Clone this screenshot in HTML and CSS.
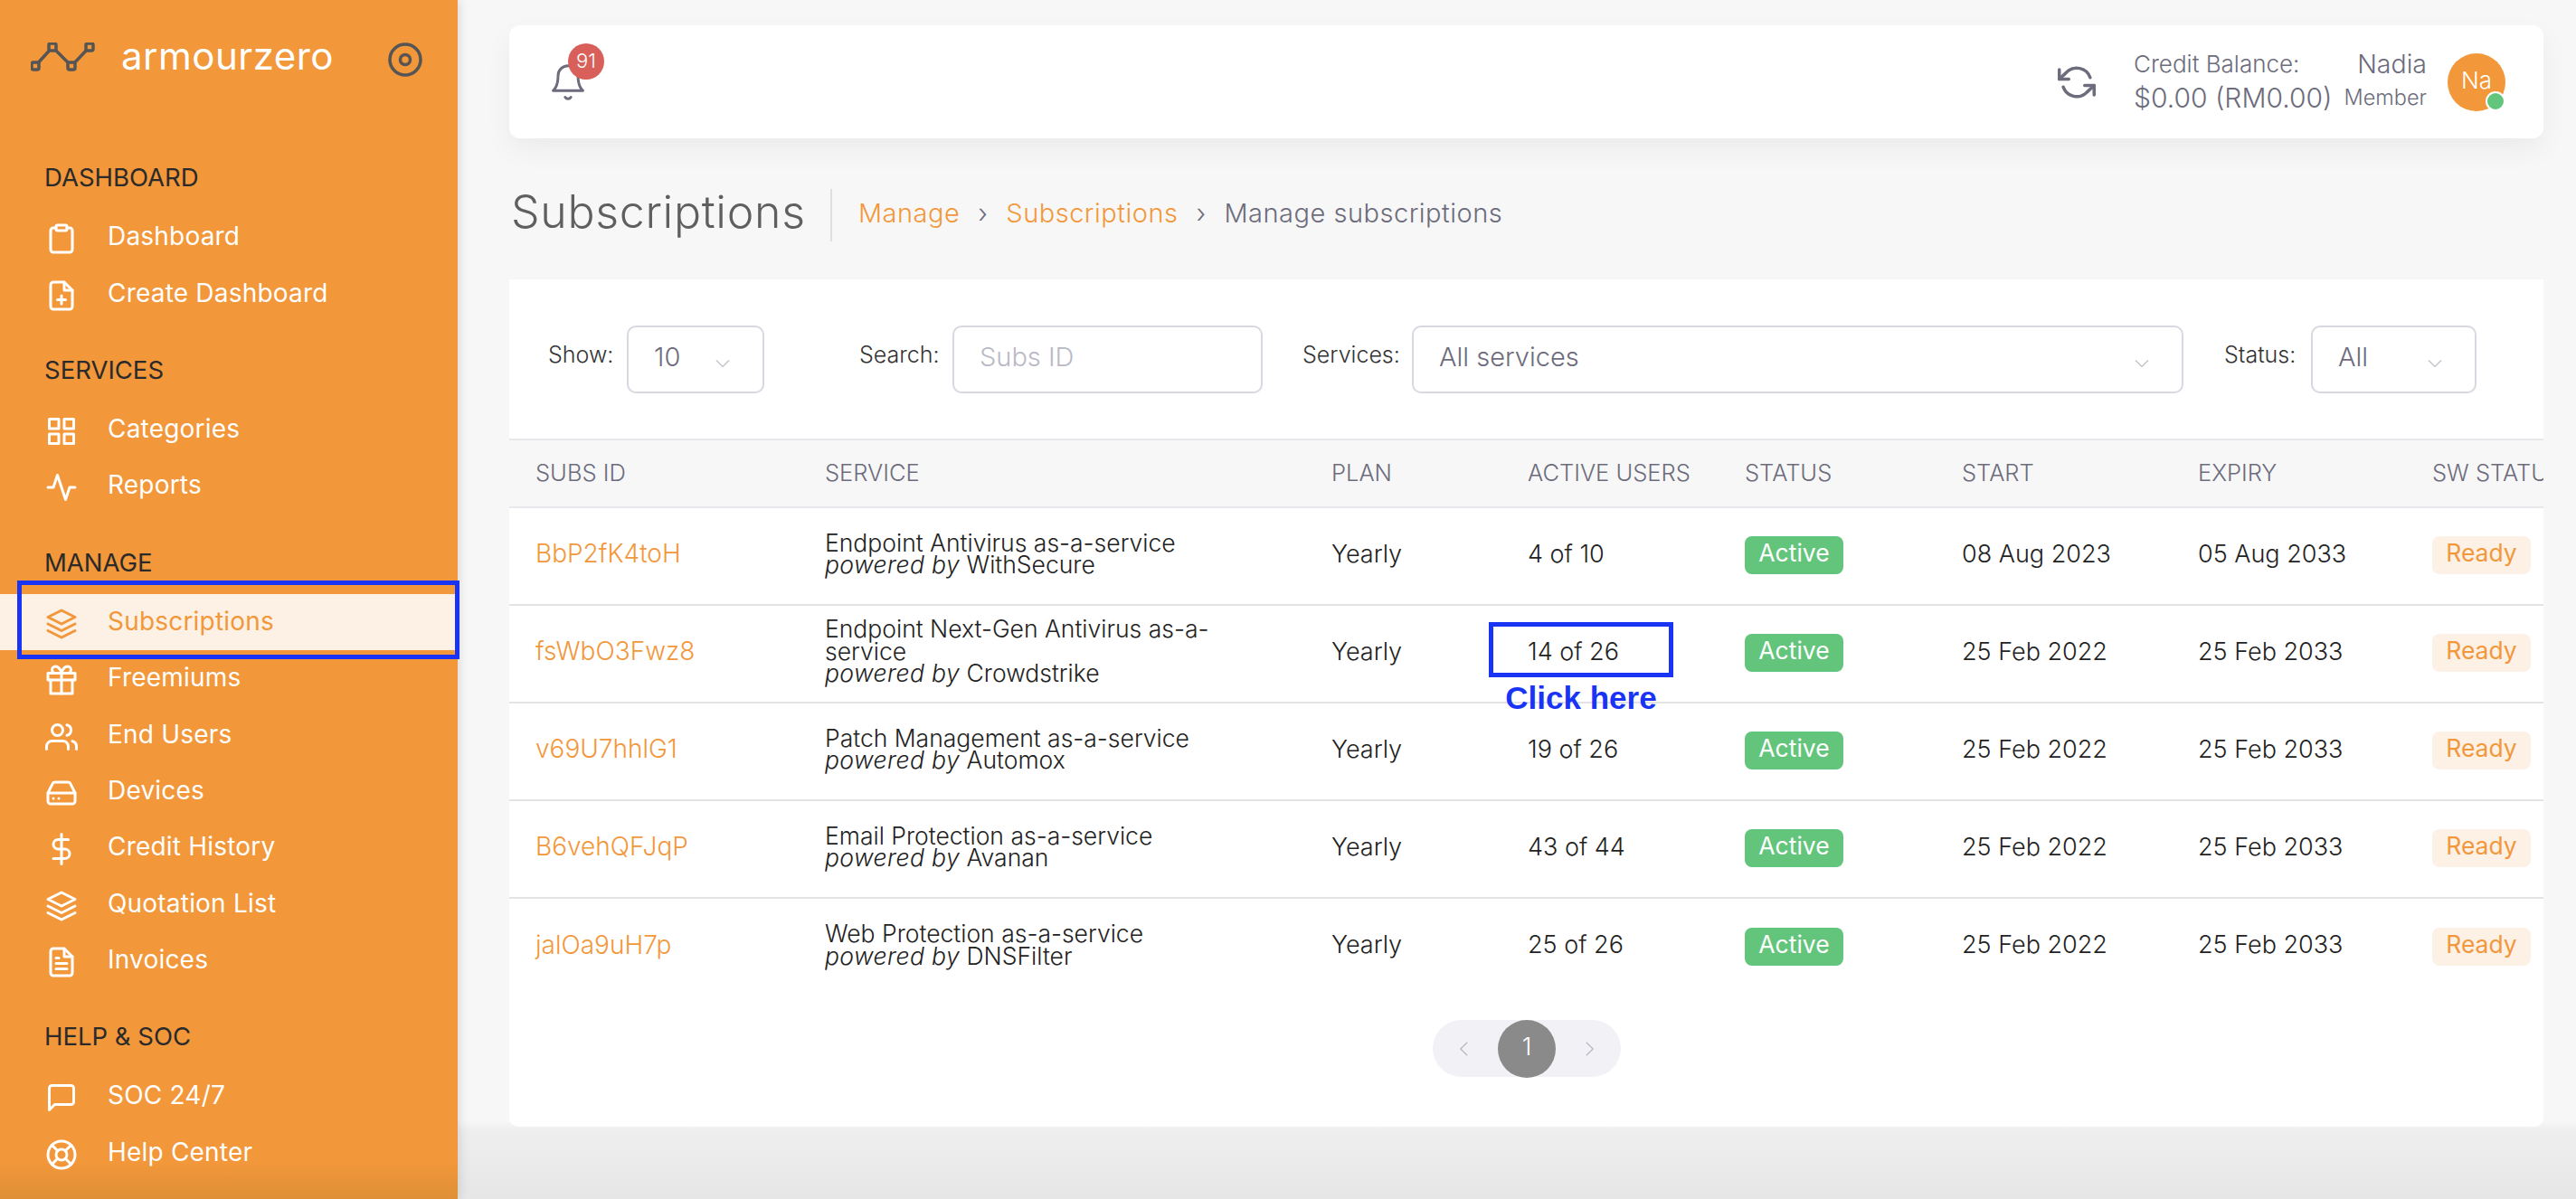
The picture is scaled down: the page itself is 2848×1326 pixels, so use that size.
FILE: index.html
```html
<!DOCTYPE html>
<html lang="en">
<head>
<meta charset="utf-8">
<title>Subscriptions</title>
<link rel="stylesheet" href="styles.css">
</head>
<body>
<svg class="sprite" aria-hidden="true">
  <symbol id="i-clipboard" viewBox="0 0 24 24"><path d="M16 4h2a2 2 0 0 1 2 2v14a2 2 0 0 1-2 2H6a2 2 0 0 1-2-2V6a2 2 0 0 1 2-2h2"/><rect x="8" y="2" width="8" height="4" rx="1"/></symbol>
  <symbol id="i-file-plus" viewBox="0 0 24 24"><path d="M14 2H6a2 2 0 0 0-2 2v16a2 2 0 0 0 2 2h12a2 2 0 0 0 2-2V8z"/><polyline points="14 2 14 8 20 8"/><line x1="12" y1="18" x2="12" y2="12"/><line x1="9" y1="15" x2="15" y2="15"/></symbol>
  <symbol id="i-grid" viewBox="0 0 24 24"><rect x="3" y="3" width="7" height="7"/><rect x="14" y="3" width="7" height="7"/><rect x="14" y="14" width="7" height="7"/><rect x="3" y="14" width="7" height="7"/></symbol>
  <symbol id="i-activity" viewBox="0 0 24 24"><polyline points="22 12 18 12 15 21 9 3 6 12 2 12"/></symbol>
  <symbol id="i-layers" viewBox="0 0 24 24"><polygon points="12 2 2 7 12 12 22 7 12 2"/><polyline points="2 17 12 22 22 17"/><polyline points="2 12 12 17 22 12"/></symbol>
  <symbol id="i-gift" viewBox="0 0 24 24"><polyline points="20 12 20 22 4 22 4 12"/><rect x="2" y="7" width="20" height="5"/><line x1="12" y1="22" x2="12" y2="7"/><path d="M12 7H7.5a2.5 2.5 0 0 1 0-5C11 2 12 7 12 7z"/><path d="M12 7h4.5a2.5 2.5 0 0 0 0-5C13 2 12 7 12 7z"/></symbol>
  <symbol id="i-users" viewBox="0 0 24 24"><path d="M17 21v-2a4 4 0 0 0-4-4H5a4 4 0 0 0-4 4v2"/><circle cx="9" cy="7" r="4"/><path d="M23 21v-2a4 4 0 0 0-3-3.87"/><path d="M16 3.13a4 4 0 0 1 0 7.75"/></symbol>
  <symbol id="i-drive" viewBox="0 0 24 24"><line x1="22" y1="12" x2="2" y2="12"/><path d="M5.45 5.11L2 12v6a2 2 0 0 0 2 2h16a2 2 0 0 0 2-2v-6l-3.45-6.89A2 2 0 0 0 16.76 4H7.24a2 2 0 0 0-1.79 1.11z"/><line x1="6" y1="16" x2="6.01" y2="16"/><line x1="10" y1="16" x2="10.01" y2="16"/></symbol>
  <symbol id="i-dollar" viewBox="0 0 24 24"><line x1="12" y1="1" x2="12" y2="23"/><path d="M17 5H9.5a3.5 3.5 0 0 0 0 7h5a3.5 3.5 0 0 1 0 7H6"/></symbol>
  <symbol id="i-file-text" viewBox="0 0 24 24"><path d="M14 2H6a2 2 0 0 0-2 2v16a2 2 0 0 0 2 2h12a2 2 0 0 0 2-2V8z"/><polyline points="14 2 14 8 20 8"/><line x1="16" y1="13" x2="8" y2="13"/><line x1="16" y1="17" x2="8" y2="17"/><polyline points="10 9 9 9 8 9"/></symbol>
  <symbol id="i-message" viewBox="0 0 24 24"><path d="M21 15a2 2 0 0 1-2 2H7l-4 4V5a2 2 0 0 1 2-2h14a2 2 0 0 1 2 2z"/></symbol>
  <symbol id="i-buoy" viewBox="0 0 24 24"><circle cx="12" cy="12" r="10"/><circle cx="12" cy="12" r="4"/><line x1="4.93" y1="4.93" x2="9.17" y2="9.17"/><line x1="14.83" y1="14.83" x2="19.07" y2="19.07"/><line x1="14.83" y1="9.17" x2="19.07" y2="4.93"/><line x1="4.93" y1="19.07" x2="9.17" y2="14.83"/></symbol>
  <symbol id="i-chevron" viewBox="0 0 16 8"><polyline points="1 0.5 8 7.5 15 0.5"/></symbol>
</svg>

<aside class="sidebar">
  <div class="brand">
    <svg class="brand-logo" viewBox="0 0 71 34"><polyline points="5 26 24 5 45 26 65 5"/><rect x="1" y="22" width="8" height="8" rx="2"/><rect x="20" y="1" width="8" height="8" rx="2"/><rect x="41" y="22" width="8" height="8" rx="2"/><rect x="61" y="1" width="8" height="8" rx="2"/></svg>
    <span class="brand-name">armourzero</span>
    <svg class="brand-target" viewBox="0 0 38 38"><circle cx="19" cy="19" r="17"/><circle cx="19" cy="19" r="5.5"/></svg>
  </div>
  <nav>
    <h2 class="nav-title">DASHBOARD</h2>
    <a class="nav-item"><svg class="ico"><use href="#i-clipboard"/></svg><span>Dashboard</span></a>
    <a class="nav-item"><svg class="ico"><use href="#i-file-plus"/></svg><span>Create Dashboard</span></a>
    <h2 class="nav-title">SERVICES</h2>
    <a class="nav-item"><svg class="ico"><use href="#i-grid"/></svg><span>Categories</span></a>
    <a class="nav-item"><svg class="ico"><use href="#i-activity"/></svg><span>Reports</span></a>
    <h2 class="nav-title">MANAGE</h2>
    <a class="nav-item active"><svg class="ico"><use href="#i-layers"/></svg><span>Subscriptions</span><i class="nav-mark"></i></a>
    <a class="nav-item"><svg class="ico"><use href="#i-gift"/></svg><span>Freemiums</span></a>
    <a class="nav-item"><svg class="ico"><use href="#i-users"/></svg><span>End Users</span></a>
    <a class="nav-item"><svg class="ico"><use href="#i-drive"/></svg><span>Devices</span></a>
    <a class="nav-item"><svg class="ico"><use href="#i-dollar"/></svg><span>Credit History</span></a>
    <a class="nav-item"><svg class="ico"><use href="#i-layers"/></svg><span>Quotation List</span></a>
    <a class="nav-item"><svg class="ico"><use href="#i-file-text"/></svg><span>Invoices</span></a>
    <h2 class="nav-title">HELP &amp; SOC</h2>
    <a class="nav-item"><svg class="ico"><use href="#i-message"/></svg><span>SOC 24/7</span></a>
    <a class="nav-item"><svg class="ico"><use href="#i-buoy"/></svg><span>Help Center</span></a>
  </nav>
</aside>

<main class="main">
  <header class="topbar">
    <div class="bell">
      <svg class="bell-ico" viewBox="0 0 24 24"><path d="M18 8A6 6 0 0 0 6 8c0 7-3 9-3 9h18s-3-2-3-9"/><path d="M13.73 21a2 2 0 0 1-3.46 0"/></svg>
      <span class="bell-badge">91</span>
    </div>
    <svg class="refresh" viewBox="0 0 24 24"><polyline points="1 4 1 10 7 10"/><polyline points="23 20 23 14 17 14"/><path d="M20.49 9A9 9 0 0 0 5.64 5.64L1 10m22 4l-4.64 4.36A9 9 0 0 1 3.51 15"/></svg>
    <div class="credit"><div class="credit-label">Credit Balance:</div><div class="credit-value">$0.00 (RM0.00)</div></div>
    <div class="user"><div class="user-name">Nadia</div><div class="user-role">Member</div></div>
    <div class="avatar">Na<i class="avatar-dot"></i></div>
  </header>

  <div class="title-row">
    <h1 class="title">Subscriptions</h1>
    <ol class="crumbs">
      <li class="crumb-link">Manage</li>
      <li class="crumb-sep">›</li>
      <li class="crumb-link">Subscriptions</li>
      <li class="crumb-sep">›</li>
      <li>Manage subscriptions</li>
    </ol>
  </div>

  <section class="card">
    <div class="filters">
      <label class="f-label f-show">Show:</label>
      <div class="field f-w-show"><span>10</span><svg class="chev"><use href="#i-chevron"/></svg></div>
      <label class="f-label f-search">Search:</label>
      <div class="field f-w-search placeholder"><span>Subs ID</span></div>
      <label class="f-label f-services">Services:</label>
      <div class="field f-w-services"><span>All services</span><svg class="chev"><use href="#i-chevron"/></svg></div>
      <label class="f-label f-status">Status:</label>
      <div class="field f-w-status"><span>All</span><svg class="chev"><use href="#i-chevron"/></svg></div>
    </div>
    <div class="table-wrap">
      <table class="table">
        <colgroup><col class="c1"><col class="c2"><col class="c3"><col class="c4"><col class="c5"><col class="c6"><col class="c7"><col class="c8"></colgroup>
        <thead><tr><th>SUBS ID</th><th>SERVICE</th><th>PLAN</th><th>ACTIVE USERS</th><th>STATUS</th><th>START</th><th>EXPIRY</th><th>SW STATUS</th></tr></thead>
        <tbody>
          <tr><td class="sid">BbP2fK4toH</td><td class="svc"><div>Endpoint Antivirus as-a-service</div><div><em>powered by</em> WithSecure</div></td><td>Yearly</td><td>4 of 10</td><td><span class="badge ok">Active</span></td><td>08 Aug 2023</td><td>05 Aug 2033</td><td><span class="badge ready">Ready</span></td></tr>
          <tr><td class="sid">fsWbO3Fwz8</td><td class="svc"><div>Endpoint Next-Gen Antivirus as-a-service</div><div><em>powered by</em> Crowdstrike</div></td><td>Yearly</td><td class="marked">14 of 26<i class="mark-box"><b class="mark-text">Click here</b></i></td><td><span class="badge ok">Active</span></td><td>25 Feb 2022</td><td>25 Feb 2033</td><td><span class="badge ready">Ready</span></td></tr>
          <tr><td class="sid">v69U7hhlG1</td><td class="svc"><div>Patch Management as-a-service</div><div><em>powered by</em> Automox</div></td><td>Yearly</td><td>19 of 26</td><td><span class="badge ok">Active</span></td><td>25 Feb 2022</td><td>25 Feb 2033</td><td><span class="badge ready">Ready</span></td></tr>
          <tr><td class="sid">B6vehQFJqP</td><td class="svc"><div>Email Protection as-a-service</div><div><em>powered by</em> Avanan</div></td><td>Yearly</td><td>43 of 44</td><td><span class="badge ok">Active</span></td><td>25 Feb 2022</td><td>25 Feb 2033</td><td><span class="badge ready">Ready</span></td></tr>
          <tr><td class="sid">jalOa9uH7p</td><td class="svc"><div>Web Protection as-a-service</div><div><em>powered by</em> DNSFilter</div></td><td>Yearly</td><td>25 of 26</td><td><span class="badge ok">Active</span></td><td>25 Feb 2022</td><td>25 Feb 2033</td><td><span class="badge ready">Ready</span></td></tr>
        </tbody>
      </table>
    </div>
    <div class="pager-row">
      <div class="pager">
        <svg class="pg-chev" viewBox="0 0 12 20"><polyline points="10 2 2 10 10 18"/></svg>
        <span class="pg-num">1</span>
        <svg class="pg-chev" viewBox="0 0 12 20"><polyline points="2 2 10 10 2 18"/></svg>
      </div>
    </div>
  </section>
</main>
</body>
</html>
```
FILE: styles.css
```css
* { box-sizing: border-box; }
html, body { margin: 0; padding: 0; }
body {
  width: 2848px;
  height: 1326px;
  display: flex;
  overflow: hidden;
  font-family: "Inter", "Liberation Sans", sans-serif;
  color: #222;
  background: linear-gradient(to bottom, #f7f7f7 0, #f7f7f7 1240px, #eeeeee 1250px, #e6e6e6 100%);
}
.sprite { display: none; }

/* Sidebar */
.sidebar {
  flex: 0 0 506px;
  height: 1326px;
  background: linear-gradient(to bottom, #f2973a 0, #f2973a 97%, #de8f37 100%);
  box-shadow: 2px 0 10px rgba(0, 0, 0, .12);
  position: relative;
  z-index: 2;
}
.brand {
  height: 128px;
  display: flex;
  align-items: center;
  padding-left: 34px;
  position: relative;
}
.brand-logo { width: 71px; height: 34px; fill: #f2973a; stroke: #555; stroke-width: 3.5; margin-bottom: 1px; }
.brand-logo polyline { fill: none; }
.brand-name { margin-left: 29px; font-size: 42px; font-weight: 400; color: #fff; margin-bottom: 5px; letter-spacing: .5px; }
.brand-target { width: 38px; height: 38px; fill: none; stroke: #555; stroke-width: 3.5; position: absolute; left: 429px; top: 47px; }
.sidebar nav { padding-top: 15px; }
.nav-title {
  margin: 33px 0 15px;
  padding-left: 49px;
  height: 40px;
  line-height: 40px;
  font-size: 27.5px;
  font-weight: 400;
  color: #2a2a2a;
}
.nav-item {
  height: 62.4px;
  display: flex;
  align-items: center;
  padding-left: 50px;
  color: #fff;
  font-size: 28px;
  font-weight: 400;
  letter-spacing: .2px;
  position: relative;
}
.nav-item span { margin-left: 33px; margin-bottom: 2px; }
.ico {
  width: 36px;
  height: 36px;
  fill: none;
  stroke: currentColor;
  stroke-width: 2;
  stroke-linecap: round;
  stroke-linejoin: round;
  margin-top: 4px;
  flex: none;
}
.nav-item.active { background: #fcf1e4; color: #f2973a; height: 62px; margin-bottom: .4px; }
.nav-mark {
  position: absolute;
  left: 19px;
  top: -15px;
  width: 489px;
  height: 87px;
  border: 5px solid #1a34f5;
}

/* Main */
.main { flex: 1; min-width: 0; padding: 28px 36px 0 57px; }
.topbar {
  height: 125px;
  background: #fff;
  border-radius: 12px;
  box-shadow: 0 12px 30px rgba(0, 0, 0, .05);
  display: flex;
  align-items: center;
  padding: 0 42px 0 46px;
  color: #6c6c7c;
}
.bell { position: relative; width: 36px; height: 125px; margin-right: auto; }
.bell-ico { position: absolute; left: -3px; top: 41px; width: 44px; height: 44px; fill: none; stroke: #6c6c7c; stroke-width: 1.6; stroke-linecap: round; stroke-linejoin: round; }
.bell-badge {
  position: absolute;
  left: 19px;
  top: 20px;
  width: 40px;
  height: 40px;
  border-radius: 50%;
  background: #d9605a;
  color: #fff;
  font-size: 22px;
  line-height: 38px;
  text-align: center;
  font-weight: 300;
}
.refresh { width: 42px; height: 42px; fill: none; stroke: #6c6c7c; stroke-width: 2; stroke-linecap: round; stroke-linejoin: round; margin-right: 42px; margin-top: 1px; }
.credit { width: 233px; }
.credit-label { font-size: 26px; line-height: 34px; font-weight: 300; }
.credit-value { font-size: 30px; line-height: 40px; font-weight: 300; white-space: nowrap; }
.user { text-align: right; width: 106px; margin-left: -15px; }
.user-name { font-size: 28.5px; line-height: 34px; font-weight: 300; }
.user-role { font-size: 23.5px; line-height: 40px; font-weight: 300; }
.avatar {
  width: 64px;
  height: 64px;
  margin-left: 23px;
  border-radius: 50%;
  background: #f2973a;
  color: #fff;
  font-size: 26px;
  font-weight: 300;
  text-align: center;
  line-height: 60px;
  position: relative;
}
.avatar-dot {
  position: absolute;
  right: 0;
  bottom: 0;
  width: 22px;
  height: 22px;
  border-radius: 50%;
  background: #63c57c;
  border: 2px solid #fff;
}

.title-row { display: flex; align-items: center; height: 58px; margin-top: 56px; padding-left: 2px; }
.title {
  margin: 0;
  font-size: 50px;
  font-weight: 300;
  letter-spacing: .7px;
  color: #5f5f5f;
  width: 355px;
  height: 58px;
  line-height: 50px;
  border-right: 2px solid #dfdfdf;
}
.crumbs { list-style: none; margin: 0 0 5px 29px; padding: 0; display: flex; font-size: 29px; letter-spacing: .5px; font-weight: 300; color: #6c6c7c; gap: 0; }
.crumb-link { color: #f2973a; }
.crumb-sep { width: 51px; text-align: center; }

.card { margin-top: 42px; background: #fff; border-radius: 0 0 10px 10px; width: 2249px; height: 937px; overflow: hidden; }
.filters { height: 176px; display: flex; align-items: center; padding: 0 0 0 43px; }
.f-label { font-size: 25px; font-weight: 300; color: #333; margin-bottom: 10px; white-space: nowrap; }
.f-show { width: 87px; }
.f-search { width: 103px; margin-left: 105px; }
.f-services { width: 121px; margin-left: 44px; }
.f-status { width: 96px; margin-left: 45px; }
.field {
  height: 75px;
  border: 2px solid #d8d8e0;
  border-radius: 10px;
  display: flex;
  align-items: center;
  justify-content: space-between;
  padding: 0 36px 5px 28px;
  font-size: 29px;
  font-weight: 300;
  color: #6c6c7c;
}
.chev { width: 16px; height: 8px; fill: none; stroke: #c6c6d0; stroke-width: 1.5; margin-top: 15px; }
.f-w-show { width: 152px; }
.f-w-search { width: 343px; }
.f-w-services { width: 853px; }
.f-w-status { width: 183px; }
.placeholder { color: #b9b9c6; }

.table-wrap { overflow: hidden; }
.table { table-layout: fixed; border-collapse: collapse; width: 2297px; }
.c1 { width: 320px; } .c2 { width: 560px; } .c3 { width: 217px; } .c4 { width: 240px; }
.c5 { width: 240px; } .c6 { width: 261px; } .c7 { width: 259px; } .c8 { width: 200px; }
.table th {
  height: 75px;
  background: #f7f7f8;
  border-top: 2px solid #e8e8ec;
  border-bottom: 2px solid #e8e8ec;
  padding: 0 0 3px 29px;
  text-align: left;
  font-size: 25.5px;
  font-weight: 300;
  color: #6c6c7c;
  white-space: nowrap;
}
.table td {
  height: 108px;
  padding: 0 0 6px 29px;
  border-bottom: 2px solid #e3e3e6;
  font-size: 27px;
  font-weight: 300;
  color: #222;
  white-space: nowrap;
  position: relative;
}
.table tbody tr:last-child td { border-bottom: 0; }
.table td.sid { color: #f2973a; font-size: 28px; }
.table td.svc { white-space: normal; font-size: 26.5px; line-height: 24.5px; padding-right: 90px; }
.table td.svc em { letter-spacing: .4px; }
.table td:nth-child(5), .table td:nth-child(8) { padding-bottom: 2px; }
.badge { display: inline-block; height: 42px; width: 109px; border-radius: 8px; text-align: center; line-height: 36px; font-size: 26.5px; font-weight: 400; }
.badge.ok { background: #63c57c; color: #fff; }
.badge.ready { background: #fdf1e6; color: #f2973a; }
.mark-box {
  position: absolute;
  left: -14px;
  top: 18px;
  width: 204px;
  height: 61px;
  border: 5px solid #1a34f5;
}
.mark-text {
  position: absolute;
  left: -5px;
  right: -5px;
  top: 60px;
  text-align: center;
  font-family: "Liberation Sans", Arial, sans-serif;
  font-style: normal;
  font-weight: 700;
  font-size: 35px;
  line-height: 38px;
  color: #1a34f5;
}

.pager-row { display: flex; padding: 27px 0 0 1021px; }
.pager { width: 208px; height: 63px; background: #f2f2f6; border-radius: 32px; display: flex; align-items: center; justify-content: space-between; padding: 0 29px; }
.pg-chev { width: 11px; height: 20px; fill: none; stroke: #bcbcc4; stroke-width: 1.6; }
.pg-num { width: 64px; height: 64px; border-radius: 50%; background: #8a8a8a; color: #fff; font-size: 27px; font-weight: 300; text-align: center; line-height: 60px; }
```
